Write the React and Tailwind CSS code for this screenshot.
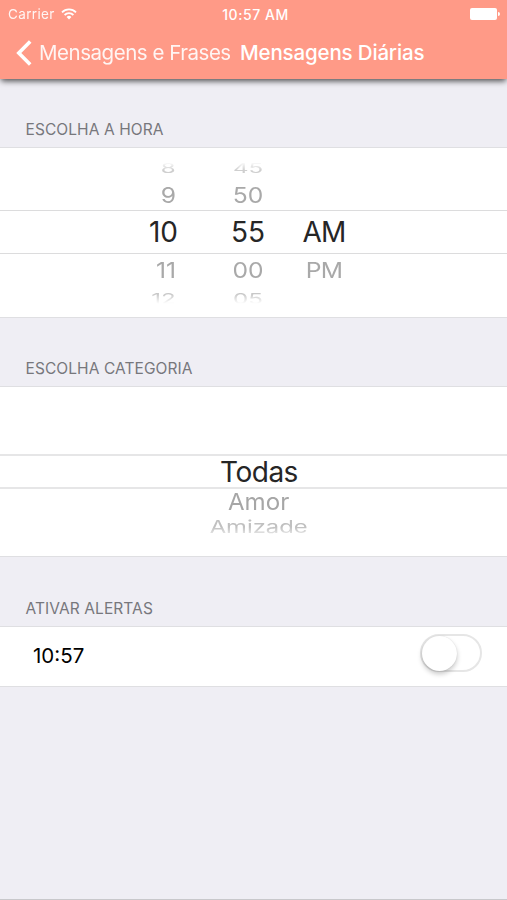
import { useState } from "react"

const timeRows = [
  { hour: "8", minute: "45", period: "", row: "h-[25px] text-[#cfcfcf] mask-t-from-35% mask-t-to-68%", text: "scale-x-[0.86] scale-y-[0.46]" },
  { hour: "9", minute: "50", period: "", row: "h-[31px] text-[#a9a9a9]", text: "scale-x-[0.88] scale-y-[0.79]" },
  { hour: "10", minute: "55", period: "AM", row: "h-[44px] border-y border-[#dcdcdd] text-[#262626]", text: "" },
  { hour: "11", minute: "00", period: "PM", row: "h-[31px] text-[#a9a9a9]", text: "scale-x-[0.88] scale-y-[0.79]" },
  { hour: "12", minute: "05", period: "", row: "h-[26px] text-[#c8c8c8] mask-b-from-35% mask-b-to-72%", text: "scale-x-[0.86] scale-y-[0.54]" },
]

const categoryRows = [
  { name: "Todas", row: "h-[35px] border-y-2 border-[#e6e6e7] text-[#262626]", text: "tracking-[-0.5px]" },
  { name: "Amor", row: "h-[26px] text-[#a6a6a6]", text: "scale-x-[0.86] scale-y-[0.84]" },
  { name: "Amizade", row: "h-[24px] text-[#c0c0c0] mask-b-from-50% mask-b-to-100%", text: "scale-x-[0.85] scale-y-[0.62]" },
]

function StatusBar() {
  return (
    <div className="grid h-[28px] grid-cols-3 items-center pl-2 pr-[7px]">

      <div className="flex items-center gap-[6px]">
        <span className="text-[13.5px] tracking-[0.35px] opacity-90">Carrier</span>
        <svg width="16" height="12" viewBox="0 0 16 12" fill="none" stroke="white" strokeWidth="1.8">
          <path d="M1 4.3a10 10 0 0 1 14 0" />
          <path d="M3.6 7a6.3 6.3 0 0 1 8.8 0" />
          <path d="M8 11.5 5.6 9a3.5 3.5 0 0 1 4.8 0Z" fill="white" stroke="none" />
        </svg>
      </div>

      <span className="pl-[3px] text-center text-[14px] font-medium tracking-[0.55px] whitespace-nowrap">10:57 AM</span>

      <div className="flex items-center justify-end gap-px">
        <div className="h-[12px] w-[27px] rounded-[2px] bg-white" />
        <div className="h-[4px] w-[2px] rounded-r-full bg-white" />
      </div>

    </div>
  )
}

function NavBar() {
  return (
    <div className="flex h-[50px] items-center pl-4 whitespace-nowrap">

      <svg width="16" height="26" viewBox="0 0 16 26" fill="none" stroke="white" strokeWidth="3.6">
        <path d="M14.2 1.6 2.8 13l11.4 11.4" />
      </svg>

      <button className="ml-[7px] w-[192px] text-left text-[20.5px] tracking-[-0.47px] opacity-90">Mensagens e Frases</button>
      <h1 className="ml-[9px] text-[20.5px] font-medium tracking-[-0.16px]">Mensagens Diárias</h1>

    </div>
  )
}

function SectionTitle({ children }) {
  return (
    <h2 className="flex grow items-end px-[25.5px] pb-[6px] text-[15.5px] leading-[22px] tracking-[0.08px] text-[#77777c]">
      {children}
    </h2>
  )
}

function TimePicker() {
  return (
    <div className="h-[171px] border-y border-[#dfdfe2] bg-white pt-[6px] text-[28px] leading-none">

      {timeRows.map((r) => (
        <div key={r.hour} className={`grid grid-cols-[200px_96px_56px] items-center ${r.row}`}>
          <span className={`ml-[145px] w-[33px] text-right ${r.text}`}>{r.hour}</span>
          <span className={`text-center ${r.text}`}>{r.minute}</span>
          <span className={`text-center tracking-[-0.8px] ${r.text}`}>{r.period}</span>
        </div>
      ))}

    </div>
  )
}

function CategoryPicker() {
  return (
    <div className="h-[171px] border-y border-[#dfdfe2] bg-white pt-[67px] text-[28px] leading-none">

      {categoryRows.map((r) => (
        <div key={r.name} className={`flex items-center justify-center pl-[11px] ${r.row}`}>
          <span className={r.text}>{r.name}</span>
        </div>
      ))}

    </div>
  )
}

function Toggle({ on, onChange }) {
  return (
    <button
      role="switch"
      aria-checked={on}
      onClick={() => onChange(!on)}
      className={`flex h-[38px] w-[62px] items-center rounded-full border-2 border-[#e6e6e6] ${on ? "justify-end bg-green-500" : "bg-white"}`}
    >
      <span className="size-[35px] rounded-full bg-white shadow-[0_3px_5px_rgba(0,0,0,0.22),0_0_1px_rgba(0,0,0,0.15)]" />
    </button>
  )
}

function App() {

  const [alerts, setAlerts] = useState(false)

  return (

    <div className="flex h-[900px] w-full flex-col border-b border-[#c8c8cb] bg-[#efeef4] font-['Inter',sans-serif]">

      <header className="h-[79px] bg-[#ff9a87] text-white shadow-[0_3px_6px_-1px_rgba(0,0,0,0.7)]">
        <StatusBar />
        <NavBar />
      </header>

      <div className="flex h-[68px]">
        <SectionTitle>ESCOLHA A HORA</SectionTitle>
      </div>
      <TimePicker />

      <div className="flex h-[68px]">
        <SectionTitle>ESCOLHA CATEGORIA</SectionTitle>
      </div>
      <CategoryPicker />

      <div className="flex h-[69px]">
        <SectionTitle>ATIVAR ALERTAS</SectionTitle>
      </div>
      <div className="flex h-[61px] items-center justify-between border-y border-[#dfdfe2] bg-white pr-[25px] pl-[33px]">
        <span className="text-[20.5px] text-black">10:57</span>
        <div className="-mt-[7px]">
          <Toggle on={alerts} onChange={setAlerts} />
        </div>
      </div>

    </div>

  )

}

export default App
